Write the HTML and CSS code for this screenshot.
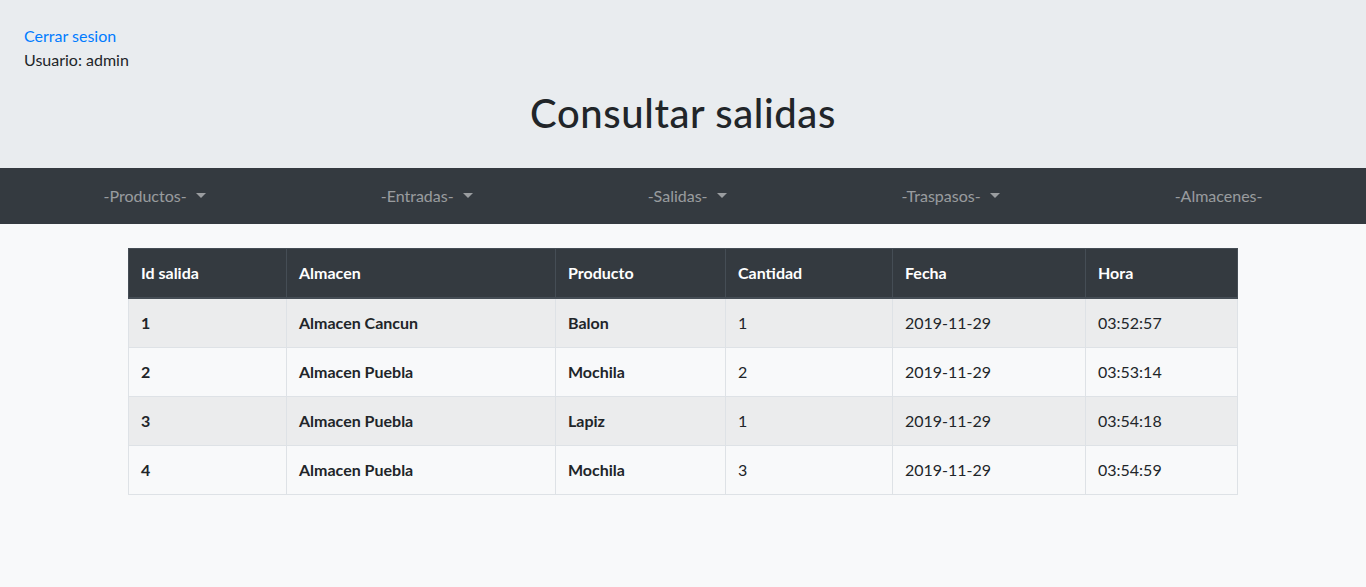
FILE: index.html
```html
<!DOCTYPE html>
<html lang="es">
<head>
<meta charset="utf-8">
<title>Consultar salidas</title>
<link rel="stylesheet" href="styles.css">
</head>
<body>
<header class="jumbo">
  <a class="logout" href="#">Cerrar sesion</a>
  <p class="user">Usuario: admin</p>
  <h1 class="title">Consultar salidas</h1>
</header>
<nav class="navbar">
  <a class="nav-link dropdown" href="#">-Productos-</a>
  <a class="nav-link dropdown" href="#">-Entradas-</a>
  <a class="nav-link dropdown" href="#">-Salidas-</a>
  <a class="nav-link dropdown" href="#">-Traspasos-</a>
  <a class="nav-link" href="#">-Almacenes-</a>
</nav>
<main class="container">
  <table class="table">
    <colgroup>
      <col class="c1"><col class="c2"><col class="c3"><col class="c4"><col class="c5"><col class="c6">
    </colgroup>
    <thead>
      <tr><th>Id salida</th><th>Almacen</th><th>Producto</th><th>Cantidad</th><th>Fecha</th><th>Hora</th></tr>
    </thead>
    <tbody>
      <tr><th>1</th><th>Almacen Cancun</th><th>Balon</th><td>1</td><td>2019-11-29</td><td>03:52:57</td></tr>
      <tr><th>2</th><th>Almacen Puebla</th><th>Mochila</th><td>2</td><td>2019-11-29</td><td>03:53:14</td></tr>
      <tr><th>3</th><th>Almacen Puebla</th><th>Lapiz</th><td>1</td><td>2019-11-29</td><td>03:54:18</td></tr>
      <tr><th>4</th><th>Almacen Puebla</th><th>Mochila</th><td>3</td><td>2019-11-29</td><td>03:54:59</td></tr>
    </tbody>
  </table>
</main>
</body>
</html>
```
FILE: styles.css
```css
* { box-sizing: border-box; }
html, body { margin: 0; padding: 0; }
body {
  background: #f8f9fa;
  color: #212529;
  font-family: "Lato", "Liberation Sans", sans-serif;
  font-size: 16px;
  line-height: 1.5;
}
.jumbo {
  background: #e9ecef;
  padding: 24px 24px 31px;
}
.logout {
  display: block;
  color: #007bff;
  text-decoration: none;
}
.user { margin: 0; }
.title {
  margin: 17px 0 0;
  text-align: center;
  font-size: 40px;
  font-weight: 500;
  line-height: 1.2;
  letter-spacing: 0.6px;
}
.navbar {
  background: #343a40;
  height: 56px;
  padding: 8px 16px;
  display: flex;
  justify-content: space-around;
  align-items: center;
}
.nav-link {
  color: rgba(255,255,255,.5);
  text-decoration: none;
  padding: 8px;
}
.dropdown::after {
  content: "";
  display: inline-block;
  margin-left: 9px;
  vertical-align: 4px;
  border-top: 5px solid;
  border-right: 5px solid transparent;
  border-left: 5px solid transparent;
  border-bottom: 0;
}
.container {
  width: 1140px;
  margin: 0 auto;
  padding: 24px 15px;
}
.table {
  width: 1110px;
  border-collapse: collapse;
  table-layout: fixed;
  border: 1px solid #dee2e6;
}
.c1 { width: 158px; } .c2 { width: 269px; } .c3 { width: 170px; }
.c4 { width: 167px; } .c5 { width: 193px; } .c6 { width: 152px; }
.table th, .table td {
  padding: 12px;
  text-align: left;
  vertical-align: top;
  border: 1px solid #dee2e6;
}
.table thead th {
  background: #343a40;
  color: #fff;
  border-color: #454d55;
  border-bottom: 2px solid #454d55;
  font-weight: 700;
}
.table tbody tr:nth-child(odd) { background: rgba(0,0,0,.05); }
.table tbody td { font-weight: 400; }
```
